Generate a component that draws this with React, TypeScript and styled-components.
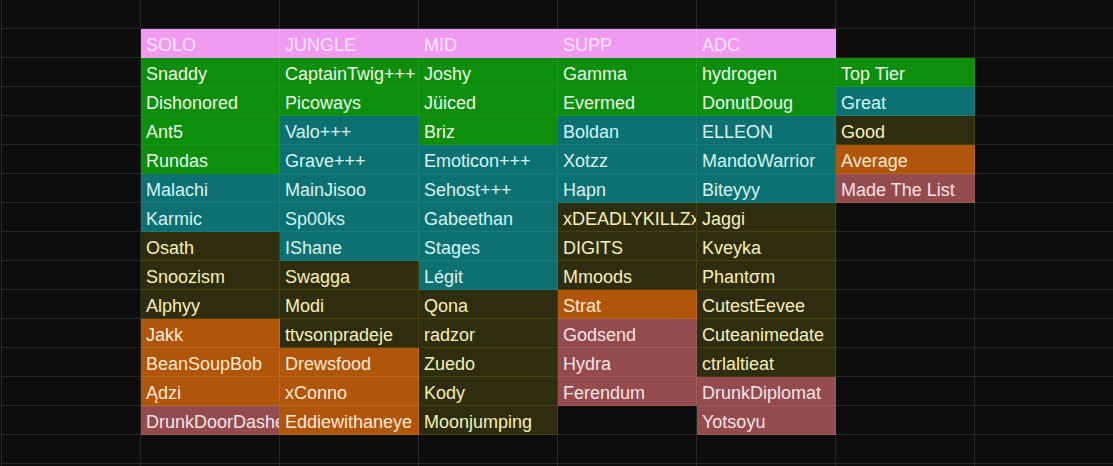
import styled, { createGlobalStyle } from "styled-components";

const GlobalStyle = createGlobalStyle`
  html, body {
    margin: 0;
    padding: 0;
    background: #0d0d0d;
    overflow: hidden;
  }
`;

type Tier = "head" | "top" | "great" | "good" | "avg" | "list" | "none";

const tiers: Record<Tier, { bg: string; fg: string; line: string }> = {
  head: { bg: "#f19af1", fg: "#fbe6fb", line: "#f2a2f2" },
  top: { bg: "#0d8f0d", fg: "#e8f5e8", line: "#1b961b" },
  great: { bg: "#0e7171", fg: "#d6f3f3", line: "#1a7b7b" },
  good: { bg: "#2f2d0f", fg: "#f6f0b8", line: "#45420f" },
  avg: { bg: "#b0560b", fg: "#fde8d6", line: "#b9661f" },
  list: { bg: "#944b4e", fg: "#f5e4e6", line: "#9c5a5d" },
  none: { bg: "transparent", fg: "#ffffff", line: "#262626" },
};

const Sheet = styled.div`
  display: grid;
  grid-template-columns: repeat(8, 139px);
  grid-auto-rows: 29px;
  margin-left: 1px;
  border-left: 1px solid #262626;
  font-family: "Liberation Sans", Arial, sans-serif;
  font-size: 18px;
`;

const Cell = styled.div<{ $tier: Tier }>`
  box-sizing: border-box;
  display: flex;
  align-items: flex-end;
  padding: 0 0 1px 5px;
  white-space: nowrap;
  overflow: hidden;
  background: ${({ $tier }) => tiers[$tier].bg};
  color: ${({ $tier }) => tiers[$tier].fg};
  border-right: 1px solid ${({ $tier }) => tiers[$tier].line};
  border-bottom: 1px solid ${({ $tier }) => tiers[$tier].line};
`;

type Entry = [string, Tier];

const G = "top", T = "great", O = "good", A = "avg", R = "list", N = "none";

const rows: Entry[][] = [
  [["SOLO", "head"], ["JUNGLE", "head"], ["MID", "head"], ["SUPP", "head"], ["ADC", "head"], ["", N]],
  [["Snaddy", G], ["CaptainTwig+++", G], ["Joshy", G], ["Gamma", G], ["hydrogen", G], ["Top Tier", G]],
  [["Dishonored", G], ["Picoways", G], ["Jüiced", G], ["Evermed", G], ["DonutDoug", G], ["Great", T]],
  [["Ant5", G], ["Valo+++", T], ["Briz", G], ["Boldan", T], ["ELLEON", T], ["Good", O]],
  [["Rundas", G], ["Grave+++", T], ["Emoticon+++", T], ["Xotzz", T], ["MandoWarrior", T], ["Average", A]],
  [["Malachi", T], ["MainJisoo", T], ["Sehost+++", T], ["Hapn", T], ["Biteyyy", T], ["Made The List", R]],
  [["Karmic", T], ["Sp00ks", T], ["Gabeethan", T], ["xDEADLYKILLZx", O], ["Jaggi", O], ["", N]],
  [["Osath", O], ["IShane", T], ["Stages", T], ["DIGITS", O], ["Kveyka", O], ["", N]],
  [["Snoozism", O], ["Swagga", O], ["Légit", T], ["Mmoods", O], ["Phantσm", O], ["", N]],
  [["Alphyy", O], ["Modi", O], ["Qona", O], ["Strat", A], ["CutestEevee", O], ["", N]],
  [["Jakk", A], ["ttvsonpradeje", O], ["radzor", O], ["Godsend", R], ["Cuteanimedate", O], ["", N]],
  [["BeanSoupBob", A], ["Drewsfood", A], ["Zuedo", O], ["Hydra", R], ["ctrlaltieat", O], ["", N]],
  [["Ądzi", A], ["xConno", A], ["Kody", O], ["Ferendum", R], ["DrunkDiplomat", R], ["", N]],
  [["DrunkDoorDasher", R], ["Eddiewithaneye", A], ["Moonjumping", O], ["", N], ["Yotsoyu", R], ["", N]],
];

const blank: Entry[] = Array.from({ length: 8 }, () => ["", N] as Entry);

export default function App() {
  const lines: Entry[][] = [
    blank,
    ...rows.map((r) => [["", N] as Entry, ...r, ["", N] as Entry]),
    blank,
    blank,
  ];
  return (
    <>
      <GlobalStyle />
      <Sheet>
        {lines.map((line, ri) =>
          line.map(([text, tier], ci) => (
            <Cell key={`${ri}-${ci}`} $tier={tier}>
              {text}
            </Cell>
          ))
        )}
      </Sheet>
    </>
  );
}
